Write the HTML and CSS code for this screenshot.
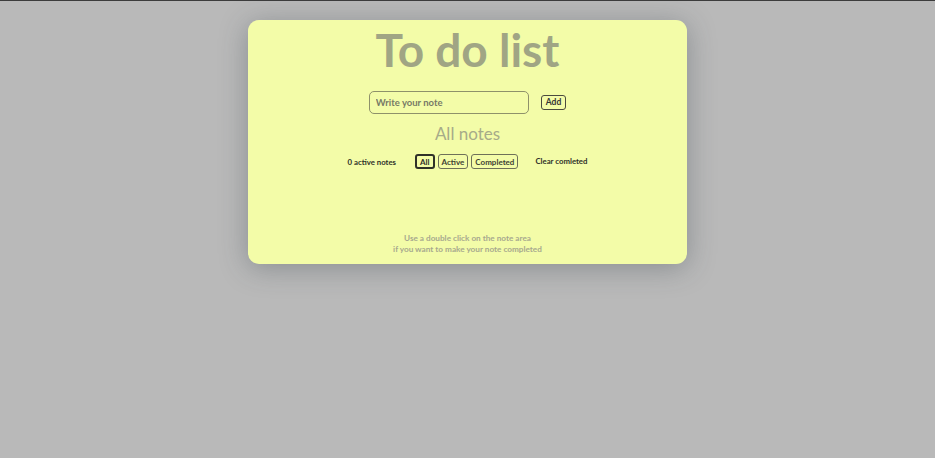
FILE: index.html
```
<!DOCTYPE html>
<html lang="en">
<head>
<meta charset="utf-8">
<title>To do list</title>
<link rel="stylesheet" href="styles.css">
</head>
<body>
<main class="card">
  <h1 class="title">To do list</h1>
  <form class="add-form">
    <input class="note-input" type="text" placeholder="Write your note">
    <button class="add-btn" type="button">Add</button>
  </form>
  <h2 class="subtitle">All notes</h2>
  <div class="toolbar">
    <span class="count">0 active notes</span>
    <div class="filters">
      <button class="filter is-active" type="button">All</button>
      <button class="filter" type="button">Active</button>
      <button class="filter" type="button">Completed</button>
    </div>
    <span class="clear">Clear comleted</span>
  </div>
  <ul class="notes"></ul>
  <p class="hint">Use a double click on the note area<br>if you want to make your note completed</p>
</main>
</body>
</html>
```
FILE: styles.css
```
* { box-sizing: border-box; }
html, body { height: 100%; }
body {
  margin: 0;
  background: #b9b9b9;
  border-top: 1px solid #3c3c3c;
  font-family: "Lato", "Noto Sans", sans-serif;
  overflow: hidden;
}
.card {
  width: 439px;
  height: 244px;
  margin: 19px auto 0;
  background: #f3fca8;
  border-radius: 11px;
  box-shadow: 0 4px 28px rgba(50, 60, 70, 0.35);
  display: flex;
  flex-direction: column;
  align-items: center;
}
.title {
  margin: 2px 0 0;
  font-size: 46px;
  line-height: 56px;
  font-weight: 700;
  color: #a0a584;
}
.add-form {
  margin-top: 13px;
  display: flex;
  align-items: center;
  gap: 12px;
}
.note-input {
  width: 160px;
  height: 23px;
  border: 1px solid #8e916a;
  border-radius: 5px;
  background: #f3fca8;
  padding: 0 6px;
  font-family: inherit;
  font-size: 9.5px;
  font-weight: 700;
  color: #555;
  outline: none;
}
.note-input::placeholder { color: #777a66; }
.add-btn {
  height: 15px;
  padding: 0 4px;
  border: 1px solid #4a4a3e;
  border-radius: 3px;
  background: #f3fca8;
  font-family: inherit;
  font-size: 8.5px;
  font-weight: 700;
  color: #333;
  line-height: 1;
}
.subtitle {
  margin: 9px 0 0;
  font-size: 17px;
  line-height: 22px;
  font-weight: 400;
  color: #a6ab88;
}
.toolbar {
  margin-top: 9px;
  display: flex;
  align-items: center;
}
.count, .clear {
  font-size: 7.8px;
  font-weight: 700;
  color: #2f3128;
}
.clear { margin-top: -2px; }
.filters {
  display: flex;
  gap: 3px;
  margin: 0 17px 0 19px;
}
.filter {
  height: 15px;
  padding: 0 3px;
  border: 1px solid #6e7058;
  border-radius: 3px;
  background: #f3fca8;
  font-family: inherit;
  font-size: 8px;
  font-weight: 700;
  color: #3d3f33;
  line-height: 1;
}
.filter.is-active {
  border: 2px solid #2f3128;
  color: #2f3128;
}
.notes {
  flex: 1;
  margin: 0;
  padding: 0;
  list-style: none;
}
.hint {
  margin: 0 0 9px;
  text-align: center;
  font-size: 8.2px;
  line-height: 11px;
  font-weight: 700;
  color: #a7a98e;
}
```
